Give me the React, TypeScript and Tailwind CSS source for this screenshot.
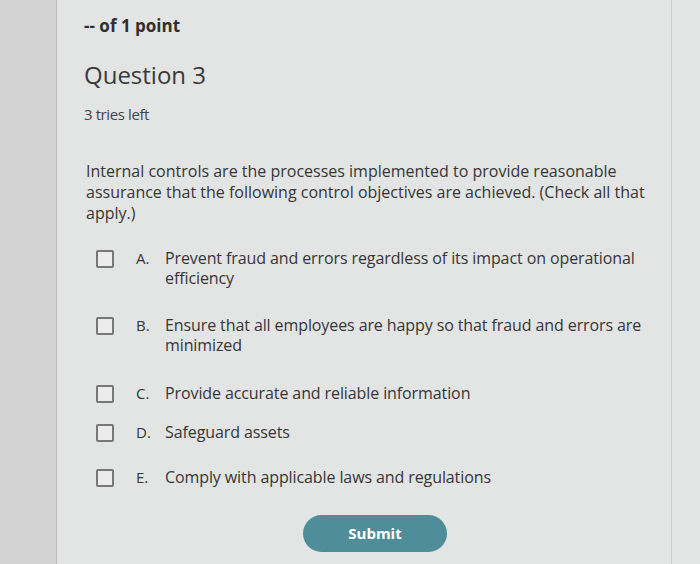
import React from "react";

const options = [
  { l: "A.", t: "Prevent fraud and errors regardless of its impact on operational efficiency" },
  { l: "B.", t: "Ensure that all employees are happy so that fraud and errors are minimized" },
  { l: "C.", t: "Provide accurate and reliable information" },
  { l: "D.", t: "Safeguard assets" },
  { l: "E.", t: "Comply with applicable laws and regulations" },
];

export default function App() {
  return (
    <div
      className="flex w-[700px] h-[564px] overflow-hidden bg-[#e3e4e4] text-[#363636]"
      style={{ fontFamily: '"Open Sans", "Liberation Sans", sans-serif' }}
    >
      <div className="w-[57px] shrink-0 bg-[#d2d2d2] border-r border-[#bdbdbd]" />
      <div className="flex-1 flex flex-col pl-[27px] pt-[14px] border-r border-[#d0d0d0] mr-[28px]">
        <div className="text-[17px] font-bold leading-[24px] text-[#303030]">-- of 1 point</div>
        <div className="mt-[22px] text-[24px] leading-[30px] text-[#3a3a3a]">Question 3</div>
        <div className="mt-[14px] text-[15px] leading-[20px] text-[#444] tracking-[-0.4px]">3 tries left</div>
        <p className="mt-[37px] text-[16px] leading-[21px] w-[570px] pl-[2px]">
          Internal controls are the processes implemented to provide reasonable assurance that the following control objectives are achieved. (Check all that apply.)
        </p>
        <div className="mt-[24px] flex flex-col pl-[12px]">
          {options.map((o, i) => (
            <div
              key={o.l}
              className={
                "flex items-start " +
                (i === 0 ? "" : i === 1 ? "mt-[27px]" : i === 2 ? "mt-[28px]" : i === 3 ? "mt-[18px]" : "mt-[24px]")
              }
            >
              <div className="w-[18px] h-[18px] mt-[2px] shrink-0 border-2 border-[#777] bg-[#ececec] rounded-[2px]" />
              <div className="w-[29px] ml-[22px] shrink-0 text-[15px] leading-[21px]">{o.l}</div>
              <div className="w-[480px] text-[16px] leading-[20px] tracking-[-0.1px]">{o.t}</div>
            </div>
          ))}
        </div>
        <div className="mt-[27px] ml-[219px] w-[144px] h-[37px] rounded-full bg-[#4f8d9b] flex items-center justify-center text-white text-[15px] font-bold">
          Submit
        </div>
      </div>
    </div>
  );
}
